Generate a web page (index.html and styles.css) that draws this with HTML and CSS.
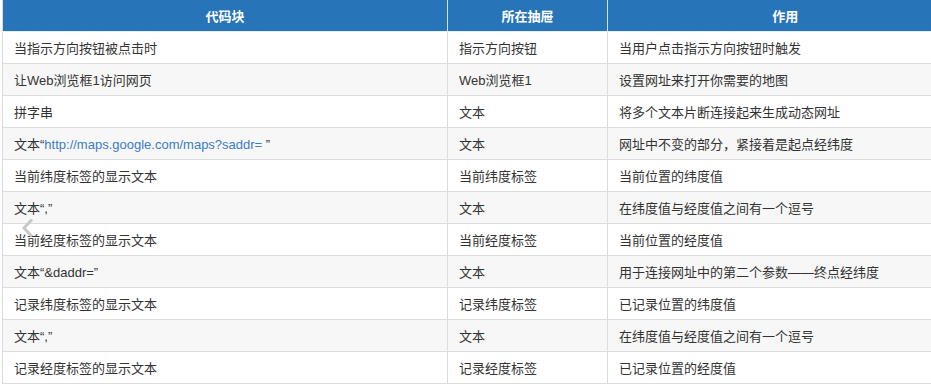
FILE: index.html
```html
<!DOCTYPE html>
<html lang="zh">
<head>
<meta charset="utf-8">
<link rel="stylesheet" href="styles.css">
</head>
<body>
<div class="wrap">
<table class="blocks">
  <colgroup>
    <col class="c1"><col class="c2"><col class="c3">
  </colgroup>
  <thead>
    <tr><th>代码块</th><th>所在抽屉</th><th>作用</th></tr>
  </thead>
  <tbody>
    <tr><td>当指示方向按钮被点击时</td><td>指示方向按钮</td><td>当用户点击指示方向按钮时触发</td></tr>
    <tr><td>让Web浏览框1访问网页</td><td>Web浏览框1</td><td>设置网址来打开你需要的地图</td></tr>
    <tr><td>拼字串</td><td>文本</td><td>将多个文本片断连接起来生成动态网址</td></tr>
    <tr><td>文本“<span class="link">http://maps.google.com/maps?saddr= </span>”</td><td>文本</td><td>网址中不变的部分，紧接着是起点经纬度</td></tr>
    <tr><td>当前纬度标签的显示文本</td><td>当前纬度标签</td><td>当前位置的纬度值</td></tr>
    <tr><td>文本“,”</td><td>文本</td><td>在纬度值与经度值之间有一个逗号</td></tr>
    <tr><td>当前经度标签的显示文本</td><td>当前经度标签</td><td>当前位置的经度值</td></tr>
    <tr><td>文本“&amp;daddr=”</td><td>文本</td><td>用于连接网址中的第二个参数——终点经纬度</td></tr>
    <tr><td>记录纬度标签的显示文本</td><td>记录纬度标签</td><td>已记录位置的纬度值</td></tr>
    <tr><td>文本“,”</td><td>文本</td><td>在纬度值与经度值之间有一个逗号</td></tr>
    <tr><td>记录经度标签的显示文本</td><td>记录经度标签</td><td>已记录位置的经度值</td></tr>
  </tbody>
</table>
<svg class="prev" width="12" height="20" viewBox="0 0 12 20" aria-hidden="true">
  <path d="M10 1.5 L2 10 L10 18.5" fill="none" stroke="#c8c8c8" stroke-width="3"/>
</svg>
</div>
</body>
</html>
```

FILE: styles.css
```css
html, body {
  margin: 0;
  padding: 0;
  background: #fff;
  overflow: hidden;
}
.wrap {
  position: relative;
  padding-left: 2px;
}
.blocks {
  border-collapse: collapse;
  table-layout: fixed;
  width: 960px;
  font-family: "Liberation Sans", "Noto Sans CJK SC", sans-serif;
  font-size: 13px;
  color: #333;
}
.c1 { width: 445px; }
.c2 { width: 160px; }
.c3 { width: 355px; }
.blocks th {
  background: #2874b9;
  color: #fff;
  font-weight: bold;
  height: 31px;
  padding: 0;
  text-align: center;
  border-left: 1px solid #dcdcdc;
  border-bottom: 1px solid #e6eef6;
  box-sizing: border-box;
}
.blocks td {
  height: 32px;
  padding: 0 0 0 11px;
  border: 1px solid #dcdcdc;
  box-sizing: border-box;
  white-space: nowrap;
}
.blocks tbody tr:nth-child(even) td {
  background: #f7f7f7;
}
.link {
  color: #3c7cc8;
}
.prev {
  position: absolute;
  left: 22px;
  top: 218px;
}
```
